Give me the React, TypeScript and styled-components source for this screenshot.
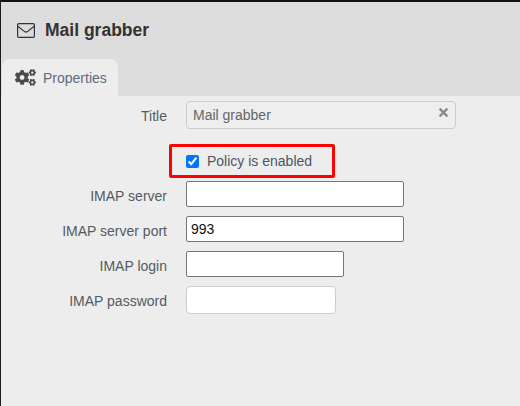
import styled, { createGlobalStyle } from "styled-components";
import { FaCogs, FaTimes } from "react-icons/fa";

const GlobalStyle = createGlobalStyle`
  html, body {
    margin: 0;
    padding: 0;
    background: #ededed;
    font-family: "Liberation Sans", Arial, sans-serif;
  }
`;

function MailIcon() {
  return (
    <svg width="18" height="15" viewBox="0 0 18 15" fill="none" stroke="#2f3540" strokeWidth="1.2">
      <rect x="0.6" y="0.6" width="16.8" height="13.8" rx="1.2" />
      <path d="M0.8 3.2 L7.6 8.6 Q9 9.6 10.4 8.6 L17.2 3.2" />
    </svg>
  );
}

export default function App() {
  return (
    <Page>
      <GlobalStyle />
      <Header>
        <TitleBar>
          <MailIcon />
          <Heading>Mail grabber</Heading>
        </TitleBar>
        <Tabs>
          <Tab>
            <FaCogs size={21} color="#4a4a4a" />
            <span>Properties</span>
          </Tab>
        </Tabs>
      </Header>
      <Form>
        <TitleRow>
          <Label htmlFor="title" $top={2}>Title</Label>
          <ClearableField>
            <TitleInput id="title" type="text" defaultValue="Mail grabber" readOnly />
            <ClearIcon>
              <FaTimes size={13} />
            </ClearIcon>
          </ClearableField>
        </TitleRow>
        <Highlight>
          <Check id="enabled" type="checkbox" defaultChecked />
          <CheckLabel htmlFor="enabled">Policy is enabled</CheckLabel>
        </Highlight>
        <Row>
          <Label htmlFor="server" $top={4}>IMAP server</Label>
          <Input id="server" type="text" $width={218} />
        </Row>
        <Row>
          <Label htmlFor="port" $top={4}>IMAP server port</Label>
          <Input id="port" type="text" $width={218} defaultValue="993" />
        </Row>
        <Row>
          <Label htmlFor="login" $top={4}>IMAP login</Label>
          <Input id="login" type="text" $width={158} />
        </Row>
        <Row>
          <Label htmlFor="password" $top={2}>IMAP password</Label>
          <PasswordInput id="password" type="password" $width={150} />
        </Row>
      </Form>
    </Page>
  );
}

const Page = styled.div`
  width: 520px;
  height: 406px;
  box-sizing: border-box;
  border-top: 2px solid #111;
  border-left: 1px solid #1c1c1c;
  background: #ededed;
  overflow: hidden;
`;

const Header = styled.div`
  height: 94px;
  background: #dddddd;
  display: flex;
  flex-direction: column;
`;

const TitleBar = styled.div`
  height: 57px;
  box-sizing: border-box;
  padding: 0 0 0 16px;
  display: flex;
  align-items: center;
  gap: 10px;
`;

const Heading = styled.h1`
  margin: 0;
  font-size: 17.5px;
  font-weight: 700;
  color: #333333;
`;

const Tabs = styled.div`
  display: flex;
  padding-left: 1px;
`;

const Tab = styled.div`
  width: 116px;
  height: 37px;
  box-sizing: border-box;
  padding-left: 13px;
  display: flex;
  align-items: center;
  gap: 7px;
  background: #ededed;
  border-radius: 8px 8px 0 0;
  font-size: 14px;
  color: #5f6b7a;
`;

const Form = styled.form`
  padding-top: 5px;
  display: flex;
  flex-direction: column;
`;

const Row = styled.div`
  display: grid;
  grid-template-columns: 166px auto;
  justify-content: start;
  align-items: center;
  column-gap: 19px;
  margin-bottom: 9px;
`;

const TitleRow = styled(Row)`
  margin-bottom: 15px;
`;

const Label = styled.label<{ $top: number }>`
  padding-top: ${(p) => p.$top}px;
  text-align: right;
  font-size: 14px;
  color: #555a62;
`;

const ClearableField = styled.div`
  position: relative;
  width: 270px;
`;

const TitleInput = styled.input`
  width: 100%;
  height: 28px;
  box-sizing: border-box;
  padding: 0 24px 0 6px;
  background: #eeeeee;
  border: 1px solid #cccccc;
  border-radius: 4px;
  outline: none;
  font-family: inherit;
  font-size: 14px;
  color: #666666;
`;

const ClearIcon = styled.span`
  position: absolute;
  top: 5px;
  right: 6px;
  color: #8a8a8a;
  display: flex;
`;

const Highlight = styled.div`
  width: 166px;
  height: 34px;
  box-sizing: border-box;
  margin: 0 0 3px 168px;
  padding-left: 14px;
  display: flex;
  align-items: center;
  border: 3px solid #ff0000;
  border-radius: 2px;
`;

const Check = styled.input`
  width: 13px;
  height: 13px;
  margin: 0 8px 0 0;
`;

const CheckLabel = styled.label`
  font-size: 14px;
  color: #4d5562;
`;

const Input = styled.input<{ $width: number }>`
  width: ${(p) => p.$width}px;
  height: 26px;
  box-sizing: border-box;
  padding: 0 1px 0 4px;
  background: #ffffff;
  border: 1px solid #767676;
  border-radius: 2px;
  outline: none;
  font-family: inherit;
  font-size: 14px;
  color: #111111;
`;

const PasswordInput = styled(Input)`
  height: 28px;
  border-color: #cccccc;
  border-radius: 4px;
`;
